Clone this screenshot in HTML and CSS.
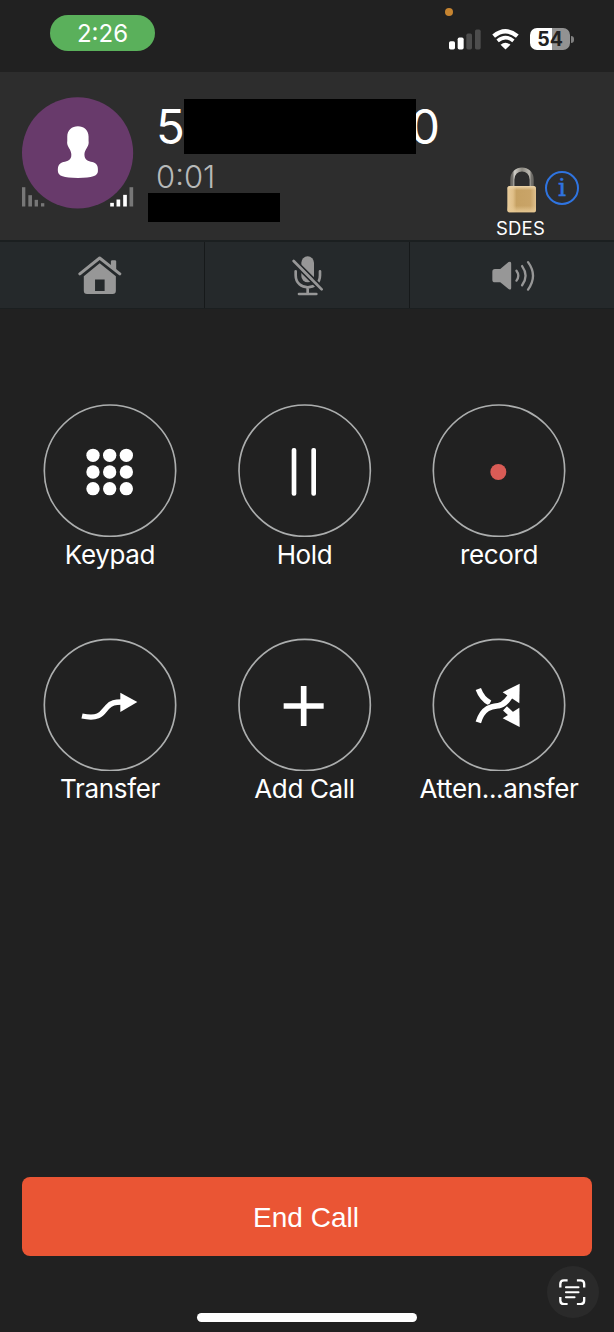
FILE: index.html
```html
<!DOCTYPE html>
<html lang="en">
<head>
    <meta charset="UTF-8">
    <meta name="viewport" content="width=device-width, initial-scale=1.0">
    <title>Call</title>
    <link rel="stylesheet" href="styles.css">
</head>
<body>
    <div class="status-bar">
        <div class="time">2:26</div>
        <div class="status-icons">
            <span class="mic-dot"></span>
            <svg class="cell" viewBox="0 0 96 62">
                <rect x="0" y="36" width="18" height="25" rx="5" fill="#fff"/>
                <rect x="26" y="25" width="18" height="36" rx="5" fill="#fff"/>
                <rect x="52" y="13" width="17" height="48" rx="5" fill="#4d4d4d"/>
                <rect x="78" y="1" width="17" height="60" rx="5" fill="#4d4d4d"/>
            </svg>
            <svg class="wifi" viewBox="0 0 82 62">
                <path d="M5 21 Q41 -9 77 21" fill="none" stroke="#fff" stroke-width="13"/>
                <path d="M17 35 Q41 15 65 35" fill="none" stroke="#fff" stroke-width="11"/>
                <path d="M26 47 Q41 35 56 47 L41 61 Z" fill="#fff"/>
            </svg>
            <div class="battery">54</div>
            <span class="battery-tip"></span>
        </div>
    </div>

    <div class="caller">
        <svg class="avatar" viewBox="0 0 335 335">
            <circle cx="167" cy="168" r="167" fill="#683a6b"/>
            <path d="M168 88 C186 88 200 99 200 119 V132 C202 143 196 150 192 158 C188 165 187 170 188 178 C190 192 204 193 216 197 C227 202 229 212 228 224 C227 237 212 243 168 243 C124 243 109 237 108 224 C107 212 109 202 120 197 C132 193 146 192 148 178 C149 170 147 165 144 158 C140 150 134 143 136 132 V119 C136 99 150 88 168 88 Z" fill="#fff"/>
            <g fill="#777">
                <rect x="0" y="271" width="10" height="58"/>
                <rect x="19" y="295" width="11" height="34"/>
                <rect x="38" y="309" width="10" height="20"/>
                <rect x="57" y="319" width="10" height="10"/>
                <rect x="323" y="271" width="11" height="58"/>
            </g>
            <g fill="#fff">
                <rect x="265" y="318" width="11" height="11"/>
                <rect x="284" y="308" width="11" height="21"/>
                <rect x="304" y="294" width="11" height="35"/>
            </g>
        </svg>
        <div class="info">
            <div class="number"><span>5</span><span class="mask"></span><span class="last">0</span></div>
            <div class="duration">0:01</div>
            <div class="mask-small"></div>
        </div>
        <div class="security">
            <div class="security-icons">
                <svg class="lock" viewBox="0 0 90 138">
                    <defs>
                        <linearGradient id="brass">
                            <stop offset="0" stop-color="#e8cc9c"/>
                            <stop offset="0.2" stop-color="#e0bf88"/>
                            <stop offset="0.32" stop-color="#c6a163"/>
                            <stop offset="0.8" stop-color="#c9a468"/>
                            <stop offset="1" stop-color="#dfc08d"/>
                        </linearGradient>
                        <linearGradient id="steel">
                            <stop offset="0" stop-color="#6d6b66"/>
                            <stop offset="0.12" stop-color="#d0cec8"/>
                            <stop offset="0.5" stop-color="#8b8880"/>
                            <stop offset="0.88" stop-color="#bbb8b0"/>
                            <stop offset="1" stop-color="#6d6b66"/>
                        </linearGradient>
                        <linearGradient id="shine" x2="0" y2="1">
                            <stop offset="0" stop-color="#edd5aa"/>
                            <stop offset="0.16" stop-color="#edd5aa" stop-opacity="0"/>
                            <stop offset="0.75" stop-color="#e6c893" stop-opacity="0"/>
                            <stop offset="1" stop-color="#e6c893"/>
                        </linearGradient>
                    </defs>
                    <path d="M16 62 V38 C16 -3 74 -3 74 38 V62" fill="none" stroke="url(#steel)" stroke-width="12"/>
                    <rect x="1" y="57" width="86" height="79" rx="8" fill="url(#brass)"/>
                    <rect x="1" y="57" width="86" height="79" rx="8" fill="url(#shine)"/>
                </svg>
                <span class="details">i</span>
            </div>
            <div class="protocol">SDES</div>
        </div>
    </div>

    <div class="toolbar">
        <div class="tool">
            <svg class="home" viewBox="0 0 132 118">
                <path d="M99 36 V17 Q99 13 103 13 H111 Q115 13 115 17 V46 Z" fill="#979797"/>
                <path d="M5 54 L65 6 L126 54" fill="none" stroke="#979797" stroke-width="9" stroke-linecap="round" stroke-linejoin="round"/>
                <path fill-rule="evenodd" d="M17 61 L65 22 L114 61 V105 Q114 115 104 115 H27 Q17 115 17 105 Z M51 71 V106 H80 V71 Z" fill="#979797"/>
            </svg>
        </div>
        <div class="tool">
            <svg class="mute" viewBox="0 0 96 120">
                <rect x="28" y="1" width="38" height="78" rx="19" fill="#979797"/>
                <path d="M11 46 V58 C11 106 84 106 84 58 V46 M47 94 V113 M21 114 H73" fill="none" stroke="#979797" stroke-width="8" stroke-linecap="round"/>
                <path d="M1 20 L86 105 M9 11 L94 96" stroke="#25292b" stroke-width="6"/>
                <path d="M5 15 L89 100" stroke="#979797" stroke-width="8" stroke-linecap="round"/>
            </svg>
        </div>
        <div class="tool">
            <svg class="speaker" viewBox="0 0 130 96">
                <path d="M9 27 H25 L50 6 Q58 2 58 10 V84 Q58 92 50 87 L25 67 H9 Q1 67 1 59 V35 Q1 27 9 27 Z" fill="#979797"/>
                <path d="M74 32 Q85 47 74 62 M91 18 Q112 47 91 76 M109 6 Q139 47 109 89" fill="none" stroke="#979797" stroke-width="7" stroke-linecap="round"/>
            </svg>
        </div>
    </div>

    <div class="actions">
        <div class="action">
            <svg viewBox="0 0 402 399">
                <circle class="ring" cx="201" cy="200" r="197"/>
                <g fill="#fff">
                    <circle cx="150" cy="154" r="20"/>
                    <circle cx="200" cy="154" r="20"/>
                    <circle cx="250" cy="154" r="20"/>
                    <circle cx="150" cy="204" r="20"/>
                    <circle cx="200" cy="204" r="20"/>
                    <circle cx="250" cy="204" r="20"/>
                    <circle cx="150" cy="254" r="20"/>
                    <circle cx="200" cy="254" r="20"/>
                    <circle cx="250" cy="254" r="20"/>
                </g>
            </svg>
            <span>Keypad</span>
        </div>
        <div class="action">
            <svg viewBox="0 0 402 399">
                <circle class="ring" cx="200" cy="200" r="197"/>
                <rect x="161" y="132" width="14" height="143" rx="6" fill="#fff"/>
                <rect x="220" y="132" width="14" height="143" rx="6" fill="#fff"/>
            </svg>
            <span>Hold</span>
        </div>
        <div class="action">
            <svg viewBox="0 0 402 399">
                <circle class="ring" cx="201" cy="200" r="197"/>
                <circle cx="199" cy="204" r="24" fill="#d95c56"/>
            </svg>
            <span>record</span>
        </div>
        <div class="action">
            <svg viewBox="0 0 402 399">
                <circle class="ring" cx="201" cy="201" r="197"/>
                <path d="M117 234 C172 246 178 223 193 207 C205 194 216 192 236 192" fill="none" stroke="#fff" stroke-width="16"/>
                <path d="M232 164 L283 192 L232 222 Z" fill="#fff"/>
            </svg>
            <span>Transfer</span>
        </div>
        <div class="action">
            <svg viewBox="0 0 402 399">
                <circle class="ring" cx="200" cy="201" r="197"/>
                <path d="M197 144 V264 M137 204 H257" stroke="#fff" stroke-width="17"/>
            </svg>
            <span>Add Call</span>
        </div>
        <div class="action">
            <svg viewBox="0 0 402 399">
                <circle class="ring" cx="201" cy="201" r="197"/>
                <path d="M139 153 Q150 183 174 195" fill="none" stroke="#fff" stroke-width="17"/>
                <path d="M219 211 L242 233" stroke="#fff" stroke-width="17"/>
                <path d="M139 253 C153 206 182 205 200 203 C218 200 229 185 242 163" fill="none" stroke="#212121" stroke-width="21"/>
                <path d="M139 253 C153 206 182 205 200 203 C218 200 229 185 242 163" fill="none" stroke="#fff" stroke-width="17"/>
                <path d="M263 137 L212 163 L262 196 Z" fill="#fff"/>
                <path d="M263 267 L212 241 L262 209 Z" fill="#fff"/>
            </svg>
            <span>Atten...ansfer</span>
        </div>
    </div>

    <div class="bottom">
        <button class="end-call">End Call</button>
        <div class="home-indicator"></div>
        <div class="scan">
            <svg viewBox="0 0 80 80">
                <path d="M4 26 V15 Q4 4 15 4 H26 M54 4 H65 Q76 4 76 15 V26 M76 54 V65 Q76 76 65 76 H54 M26 76 H15 Q4 76 4 65 V54" fill="none" stroke="#fff" stroke-width="7"/>
                <path d="M21 25 H59 M21 40 H59 M21 55 H47" stroke="#fff" stroke-width="6" stroke-linecap="round"/>
            </svg>
        </div>
    </div>
</body>
</html>
```

FILE: styles.css
```css
* {
    box-sizing: border-box;
}
body {
    font-family: Inter, Roboto, sans-serif;
    display: flex;
    flex-direction: column;
    width: 614px;
    height: 1332px;
    margin: 0;
    background-color: #212121;
    color: white;
    overflow: hidden;
}
svg {
    display: block;
    flex-shrink: 0;
}
.status-bar {
    display: flex;
    justify-content: space-between;
    align-items: flex-start;
    height: 72px;
    padding: 15px 40px 0 50px;
}
.time {
    width: 105px;
    height: 36px;
    border-radius: 18px;
    background-color: #5ab05b;
    font-size: 24px;
    font-weight: 400;
    line-height: 37px;
    text-align: center;
}
.status-icons {
    display: flex;
    align-items: center;
    position: relative;
    height: 22px;
    margin-top: 13px;
}
.mic-dot {
    position: absolute;
    top: -20px;
    left: -4px;
    width: 8px;
    height: 8px;
    border-radius: 50%;
    background-color: #c68430;
}
.cell {
    width: 32px;
    height: 21px;
}
.wifi {
    width: 27px;
    height: 21px;
    margin-left: 11px;
}
.battery {
    width: 40px;
    height: 22px;
    margin-left: 11px;
    border-radius: 7px;
    background: linear-gradient(to right, #fff 55%, #929292 55%);
    color: #212121;
    font-size: 19.5px;
    font-weight: 700;
    line-height: 23px;
    text-align: center;
}
.battery-tip {
    width: 3px;
    height: 7px;
    margin-left: 1px;
    border-radius: 0 4px 4px 0;
    background-color: #808080;
}
.caller {
    display: flex;
    height: 168px;
    padding-left: 22px;
    background-color: #2d2d2d;
}
.avatar {
    width: 111.5px;
    height: 111.5px;
    margin-top: 25.4px;
}
.info {
    width: 320px;
    margin-left: 14.5px;
    padding-top: 27px;
}
.number {
    display: flex;
    height: 55px;
    padding-left: 8px;
    font-size: 47.5px;
    line-height: 55px;
}
.number span {
    width: 28px;
    flex-shrink: 0;
}
.number .mask {
    width: 232px;
    background-color: #000;
    z-index: 1;
}
.number .last {
    margin-left: -6px;
}
.duration {
    height: 39px;
    padding-left: 8px;
    color: #b7b9b9;
    font-size: 31px;
    font-weight: 350;
    line-height: 46px;
}
.mask-small {
    width: 132px;
    height: 29px;
    background-color: #000;
}
.security {
    display: flex;
    flex-direction: column;
    margin-left: 28px;
    padding-top: 95px;
}
.security-icons {
    display: flex;
    align-items: flex-start;
    gap: 8px;
    padding-left: 11px;
}
.lock {
    width: 30px;
    height: 46px;
}
.details {
    width: 34px;
    height: 34px;
    margin-top: 4px;
    border: 2px solid #2f74e0;
    border-radius: 50%;
    color: #2f74e0;
    font-family: "DejaVu Serif", serif;
    font-size: 25px;
    line-height: 30px;
    text-align: center;
    -webkit-text-stroke: 0.5px #2f74e0;
}
.protocol {
    font-size: 18.5px;
    line-height: 30px;
    letter-spacing: 0.2px;
}
.toolbar {
    display: flex;
    height: 69px;
    border-top: 2px solid #1b1f20;
    border-bottom: 1px solid #1b1f20;
    background-color: #25292b;
}
.tool {
    flex: 1;
    display: flex;
    justify-content: center;
    align-items: center;
    padding-top: 1px;
}
.tool + .tool {
    border-left: 1px solid #16191a;
}
.home {
    width: 44px;
    height: 39px;
    margin-right: 4px;
}
.mute {
    width: 32px;
    height: 40px;
    margin-left: 1px;
}
.speaker {
    width: 43px;
    height: 32px;
    margin-left: 2px;
}
.actions {
    flex: 1;
    display: grid;
    grid-template-columns: repeat(3, 194.5px);
    grid-auto-rows: 234.3px;
    padding: 95px 0 0 12.75px;
}
.action {
    display: flex;
    flex-direction: column;
    align-items: center;
    font-size: 26px;
    line-height: 36px;
    letter-spacing: -0.35px;
    white-space: nowrap;
}
.action svg {
    width: 134px;
    height: 133px;
}
.ring {
    fill: none;
    stroke: #acaeae;
    stroke-width: 5;
}
.bottom {
    display: flex;
    flex-direction: column;
    align-items: center;
    position: relative;
    height: 155px;
}
.end-call {
    width: 570px;
    height: 79px;
    padding: 3px 2px 0 0;
    border: none;
    border-radius: 8px;
    background-color: #ea5534;
    color: white;
    font-family: "Liberation Sans", Arial, sans-serif;
    font-size: 28px;
    cursor: pointer;
}
.home-indicator {
    width: 220px;
    height: 9px;
    margin-top: 57px;
    border-radius: 5px;
    background-color: #fff;
}
.scan {
    position: absolute;
    right: 15px;
    bottom: 14px;
    display: flex;
    justify-content: center;
    align-items: center;
    width: 52px;
    height: 52px;
    border-radius: 50%;
    background-color: #2a2a2a;
}
.scan svg {
    width: 26.5px;
    height: 26.5px;
    margin-right: 1px;
}
```
